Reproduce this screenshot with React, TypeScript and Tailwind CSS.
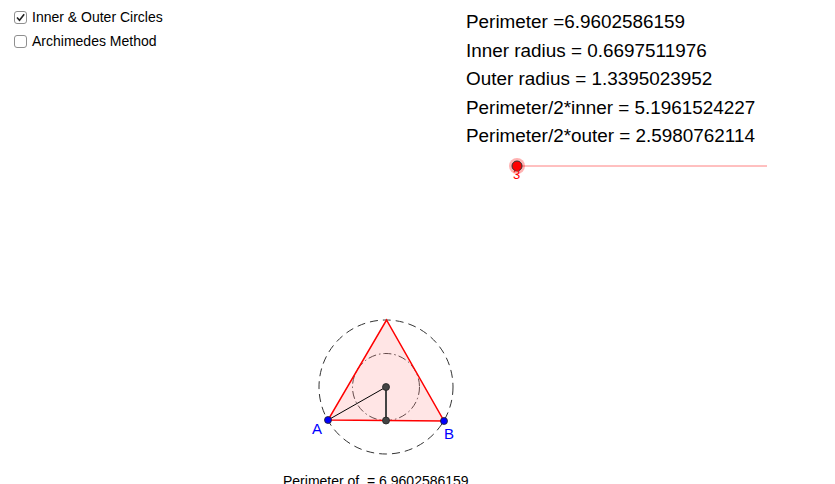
const font = { fontFamily: '"Liberation Sans", Arial, sans-serif' };

const values = [
    'Perimeter =6.9602586159',
    'Inner radius = 0.6697511976',
    'Outer radius = 1.3395023952',
    'Perimeter/2*inner = 5.1961524227',
    'Perimeter/2*outer = 2.5980762114',
];

const Check = ({ checked, label }: { checked: boolean; label: string }) => (
    <label className="flex items-center gap-[5px] h-6 text-[14px] text-black">
        <span className="w-[13px] h-[13px] rounded-[3px] border border-[#8f8f8f] bg-white flex items-center justify-center">
            {checked && (
                <svg width="11" height="11" viewBox="0 0 11 11">
                    <path d="M2 5.5 L4.5 8.2 L9.2 2.2" stroke="#222" strokeWidth="1.6" fill="none" />
                </svg>
            )}
        </span>
        {label}
    </label>
);

export default function App() {
    return (
        <div className="relative w-[835px] h-[484px] overflow-hidden bg-white" style={font}>
            {/* checkboxes */}
            <div className="flex flex-col pt-[5px] pl-[14px]">
                <Check checked label="Inner & Outer Circles" />
                <Check checked={false} label="Archimedes Method" />
            </div>

            {/* values */}
            <div className="absolute left-[466px] top-[8px] flex flex-col text-[18.9px] leading-[28.5px] text-black">
                {values.map((v) => (
                    <span key={v}>{v}</span>
                ))}
            </div>

            {/* drawing */}
            <svg className="absolute inset-0" width="835" height="484" viewBox="0 0 835 484">
                {/* slider */}
                <line x1="517" y1="166" x2="767" y2="166" stroke="#ff8080" strokeWidth="1" />
                <circle cx="517" cy="166" r="8" fill="#ff0000" fillOpacity="0.3" />
                <circle cx="517" cy="166" r="5" fill="#ff0000" stroke="#333" strokeWidth="1" />

                {/* circles */}
                <circle cx="386" cy="387" r="67" fill="none" stroke="#333" strokeWidth="1" strokeDasharray="8 5" />
                <circle cx="386" cy="387" r="33.5" fill="none" stroke="#555" strokeWidth="1" strokeDasharray="8 3 1.5 3" />

                {/* triangle */}
                <polygon points="328,420 444,421 386.5,320" fill="#ff0000" fillOpacity="0.1" stroke="#ff0000" strokeWidth="1.5" />
                <line x1="386" y1="387" x2="328" y2="420" stroke="#000" strokeWidth="1" />
                <line x1="386" y1="387" x2="386" y2="420.5" stroke="#444" strokeWidth="2" />

                <circle cx="386" cy="387" r="3.5" fill="#444" stroke="#222" strokeWidth="0.8" />
                <circle cx="386" cy="420.5" r="3.5" fill="#444" stroke="#222" strokeWidth="0.8" />
                <circle cx="328" cy="420" r="3.5" fill="#0000ff" stroke="#222" strokeWidth="0.8" />
                <circle cx="444" cy="421" r="3.5" fill="#0000ff" stroke="#222" strokeWidth="0.8" />
            </svg>

            {/* labels */}
            <span className="absolute left-[513px] top-[167px] text-[13px] leading-[16px] text-[#ff0000]">3</span>
            <span className="absolute left-[312px] top-[420px] text-[15px] leading-[18px] text-[#0000ff]">A</span>
            <span className="absolute left-[444px] top-[425px] text-[15px] leading-[18px] text-[#0000ff]">B</span>
            <span className="absolute left-[283px] top-[473px] text-[14px] leading-[16px] text-black whitespace-pre">
                {'Perimeter of  = 6.9602586159'}
            </span>
        </div>
    );
}
